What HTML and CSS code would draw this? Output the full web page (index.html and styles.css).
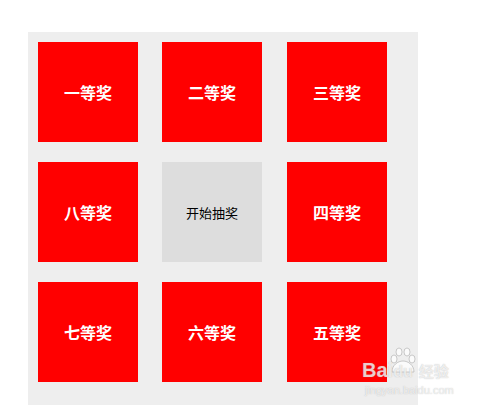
FILE: index.html
```html
<!DOCTYPE html>
<html>
<head>
<meta charset="utf-8">
<link rel="stylesheet" href="styles.css">
</head>
<body>
<div class="board">
  <div class="cell prize">一等奖</div>
  <div class="cell prize">二等奖</div>
  <div class="cell prize">三等奖</div>
  <div class="cell prize">八等奖</div>
  <div class="cell start">开始抽奖</div>
  <div class="cell prize">四等奖</div>
  <div class="cell prize">七等奖</div>
  <div class="cell prize">六等奖</div>
  <div class="cell prize">五等奖</div>
</div>
<div class="watermark">
  <svg class="wm-paw" width="30" height="30" viewBox="0 0 30 30">
    <g fill="rgba(255,255,255,0.75)" stroke="rgba(170,170,170,0.6)" stroke-width="1">
      <ellipse cx="6" cy="13" rx="3" ry="4"/>
      <ellipse cx="11" cy="6" rx="3" ry="4"/>
      <ellipse cx="19" cy="6" rx="3" ry="4"/>
      <ellipse cx="24" cy="13" rx="3" ry="4"/>
      <path d="M4 26 C4 19 10 15 15 15 C20 15 26 19 26 26 Z"/>
    </g>
  </svg>
  <div class="wm-main">Bai<span class="wm-du">du</span><span class="wm-cn">经验</span></div>
  <div class="wm-url">jingyan.baidu.com</div>
</div>
</body>
</html>
```
FILE: styles.css
```css
html, body {
  margin: 0;
  padding: 0;
  background: #fff;
  overflow: hidden;
}
body {
  width: 480px;
  height: 405px;
  position: relative;
  font-family: "Noto Sans CJK SC", "Microsoft YaHei", sans-serif;
}
.board {
  margin: 32px 0 0 28px;
  width: 370px;
  height: 370px;
  padding: 10px;
  background: #eeeeee;
  display: grid;
  grid-template-columns: 124px 125px 100px;
  grid-template-rows: 120px 120px 100px;
}
.cell {
  width: 100px;
  height: 100px;
  display: flex;
  align-items: center;
  justify-content: center;
}
.prize {
  background: #ff0000;
  color: #fff;
  font-weight: bold;
  font-size: 16px;
}
.start {
  background: #dddddd;
  color: #000;
  font-size: 13px;
}
.watermark {
  position: absolute;
  left: 362px;
  top: 358px;
  color: rgba(255, 255, 255, 0.72);
  text-shadow: 0 0 1px rgba(140, 140, 140, 0.6);
  font-family: "Liberation Sans", sans-serif;
}
.wm-paw {
  position: absolute;
  left: 26px;
  top: -12px;
}
.wm-main {
  position: relative;
  font-size: 20px;
  font-weight: bold;
  line-height: 24px;
  white-space: nowrap;
}
.wm-du {
  font-size: 16px;
}
.wm-cn {
  font-family: "Noto Sans CJK SC", sans-serif;
  font-size: 15px;
  margin-left: 6px;
}
.wm-url {
  font-size: 11px;
  line-height: 13px;
  margin-left: 3px;
  white-space: nowrap;
}
```
